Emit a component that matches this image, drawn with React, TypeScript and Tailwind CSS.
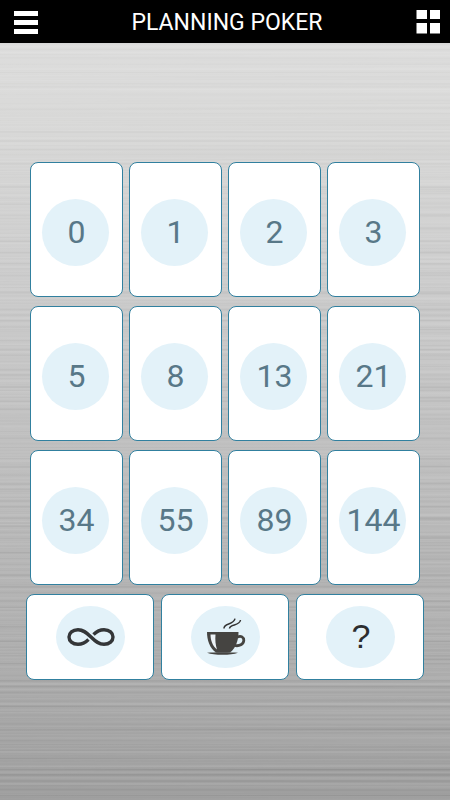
import React from "react";

const values = ["0", "1", "2", "3", "5", "8", "13", "21", "34", "55", "89", "144"];

function BrushedMetal() {
  return (
    <svg aria-hidden="true" className="absolute inset-0 -z-10 h-full w-full">
      <defs>
        <linearGradient id="steel" x1="0" y1="0" x2="0" y2="1">
          <stop offset="0" stopColor="#dfdfdf" />
          <stop offset="0.15" stopColor="#d9d9d8" />
          <stop offset="0.35" stopColor="#cccccc" />
          <stop offset="0.6" stopColor="#bdbdbd" />
          <stop offset="0.82" stopColor="#aeaeae" />
          <stop offset="1" stopColor="#9f9f9f" />
        </linearGradient>
        <filter id="brush" x="0" y="0" width="100%" height="100%" colorInterpolationFilters="sRGB">
          <feTurbulence type="fractalNoise" baseFrequency="0.0005 0.35" numOctaves="2" seed="7" />
          <feColorMatrix values="1.6 0 0 0 -0.3  1.6 0 0 0 -0.3  1.6 0 0 0 -0.3  0 0 0 0 1" />
        </filter>
      </defs>
      <rect width="100%" height="100%" fill="url(#steel)" />
      <rect width="100%" height="100%" filter="url(#brush)" className="opacity-25 mix-blend-soft-light" />
    </svg>
  );
}

function MenuIcon() {
  return (
    <svg aria-hidden="true" viewBox="0 0 24 24" className="size-6 fill-white">
      <path d="M0 1h24v5H0zM0 10h24v5H0zM0 19h24v5H0z" />
    </svg>
  );
}

function GridIcon() {
  return (
    <svg aria-hidden="true" viewBox="0 0 24 24" className="size-6 fill-white">
      <path d="M0.500 0h10.500v9H0.500zM14 0h10v9H14zM0.500 13h10.500v10.500H0.500zM14 13h10v10.500H14z" />
    </svg>
  );
}

function InfinityIcon() {
  return (
    <svg aria-hidden="true" viewBox="0 0 48 20" className="h-5 w-12 fill-none" stroke="#343638" strokeWidth="3.4">
      <path d="M21.500 12.500 C18 16 15 17.300 11 17.300 C5.500 17.300 2 14 2 10 C2 6 5.500 2.700 11 2.700 C16 2.700 19 5 24 10 C29 15 32 17.300 37 17.300 C42.500 17.300 46 14 46 10 C46 6 42.500 2.700 37 2.700 C33 2.700 30 4 26.500 7.500" />
    </svg>
  );
}

function CoffeeIcon() {
  return (
    <svg aria-hidden="true" viewBox="0 0 40 38" className="h-[38px] w-10">
      <path d="M1 14H32.500C32.500 22 30 30 24 34.500H10C3.500 30 1 22 1 14Z" fill="#454441" />
      <path d="M4.500 16.500H9.500C9 22 9.500 27 11 31.500C6.500 28 4.500 22 4.500 16.500Z" fill="#edf3f7" />
      <path d="M31.500 19C35 17.300 38 19.300 37.800 22.500C37.500 26.300 33.500 28.500 28.500 27.500" fill="none" stroke="#454441" strokeWidth="2.800" />
      <path d="M1 34.800C8 34 25 34 32 34.800C28 36.300 23 36.800 16.500 36.800C10 36.800 5 36.300 1 34.800Z" fill="#454441" />
      <path d="M18 10.500C17.500 4.500 27.500 7.500 29 0.700M23.500 10.500C24 5.500 33.500 8.500 34.500 2" fill="none" stroke="#333" strokeWidth="1.500" />
    </svg>
  );
}

function SpecialCard({ label, children }: { label: string; children: React.ReactNode }) {
  return (
    <button
      type="button"
      aria-label={label}
      className="flex h-[86px] items-center justify-center rounded-lg border border-[#31809f] bg-white"
    >
      <span className="flex h-[62px] w-[69px] items-center justify-center rounded-[50%] bg-[#e3f2f9] pl-[2px]">
        {children}
      </span>
    </button>
  );
}

export default function App() {
  return (
    <div className="relative isolate flex min-h-screen flex-col font-['Roboto',sans-serif]">
      <BrushedMetal />
      <header className="flex h-[43px] items-center justify-between bg-black pr-[10px] pl-[14px]">
        <button type="button" aria-label="Menu">
          <MenuIcon />
        </button>
        <h1 className="pt-[3px] text-[23px] leading-7 text-white">PLANNING POKER</h1>
        <button type="button" aria-label="Grid view">
          <GridIcon />
        </button>
      </header>
      <main className="flex flex-col gap-[9px] px-[26px] pt-[119px] pb-8">
        <div className="grid grid-cols-4 gap-x-[6px] gap-y-[9px] px-1">
          {values.map((value) => (
            <button
              key={value}
              type="button"
              className="flex h-[135px] items-center justify-center rounded-lg border border-[#31809f] bg-white pt-[6px] pr-[2px] text-[32px] text-[#587888]"
            >
              <span className="flex size-[67px] items-center justify-center rounded-full bg-[#e3f2f9] pb-[2px] pl-[2px]">
                {value}
              </span>
            </button>
          ))}
        </div>
        <div className="grid grid-cols-3 gap-[7px]">
          <SpecialCard label="Infinity">
            <InfinityIcon />
          </SpecialCard>
          <SpecialCard label="Coffee break">
            <CoffeeIcon />
          </SpecialCard>
          <SpecialCard label="Unknown">
            <span className="pb-[2px] font-['Liberation_Sans',sans-serif] text-[34px] leading-none text-[#2c2e30]">?</span>
          </SpecialCard>
        </div>
      </main>
    </div>
  );
}
